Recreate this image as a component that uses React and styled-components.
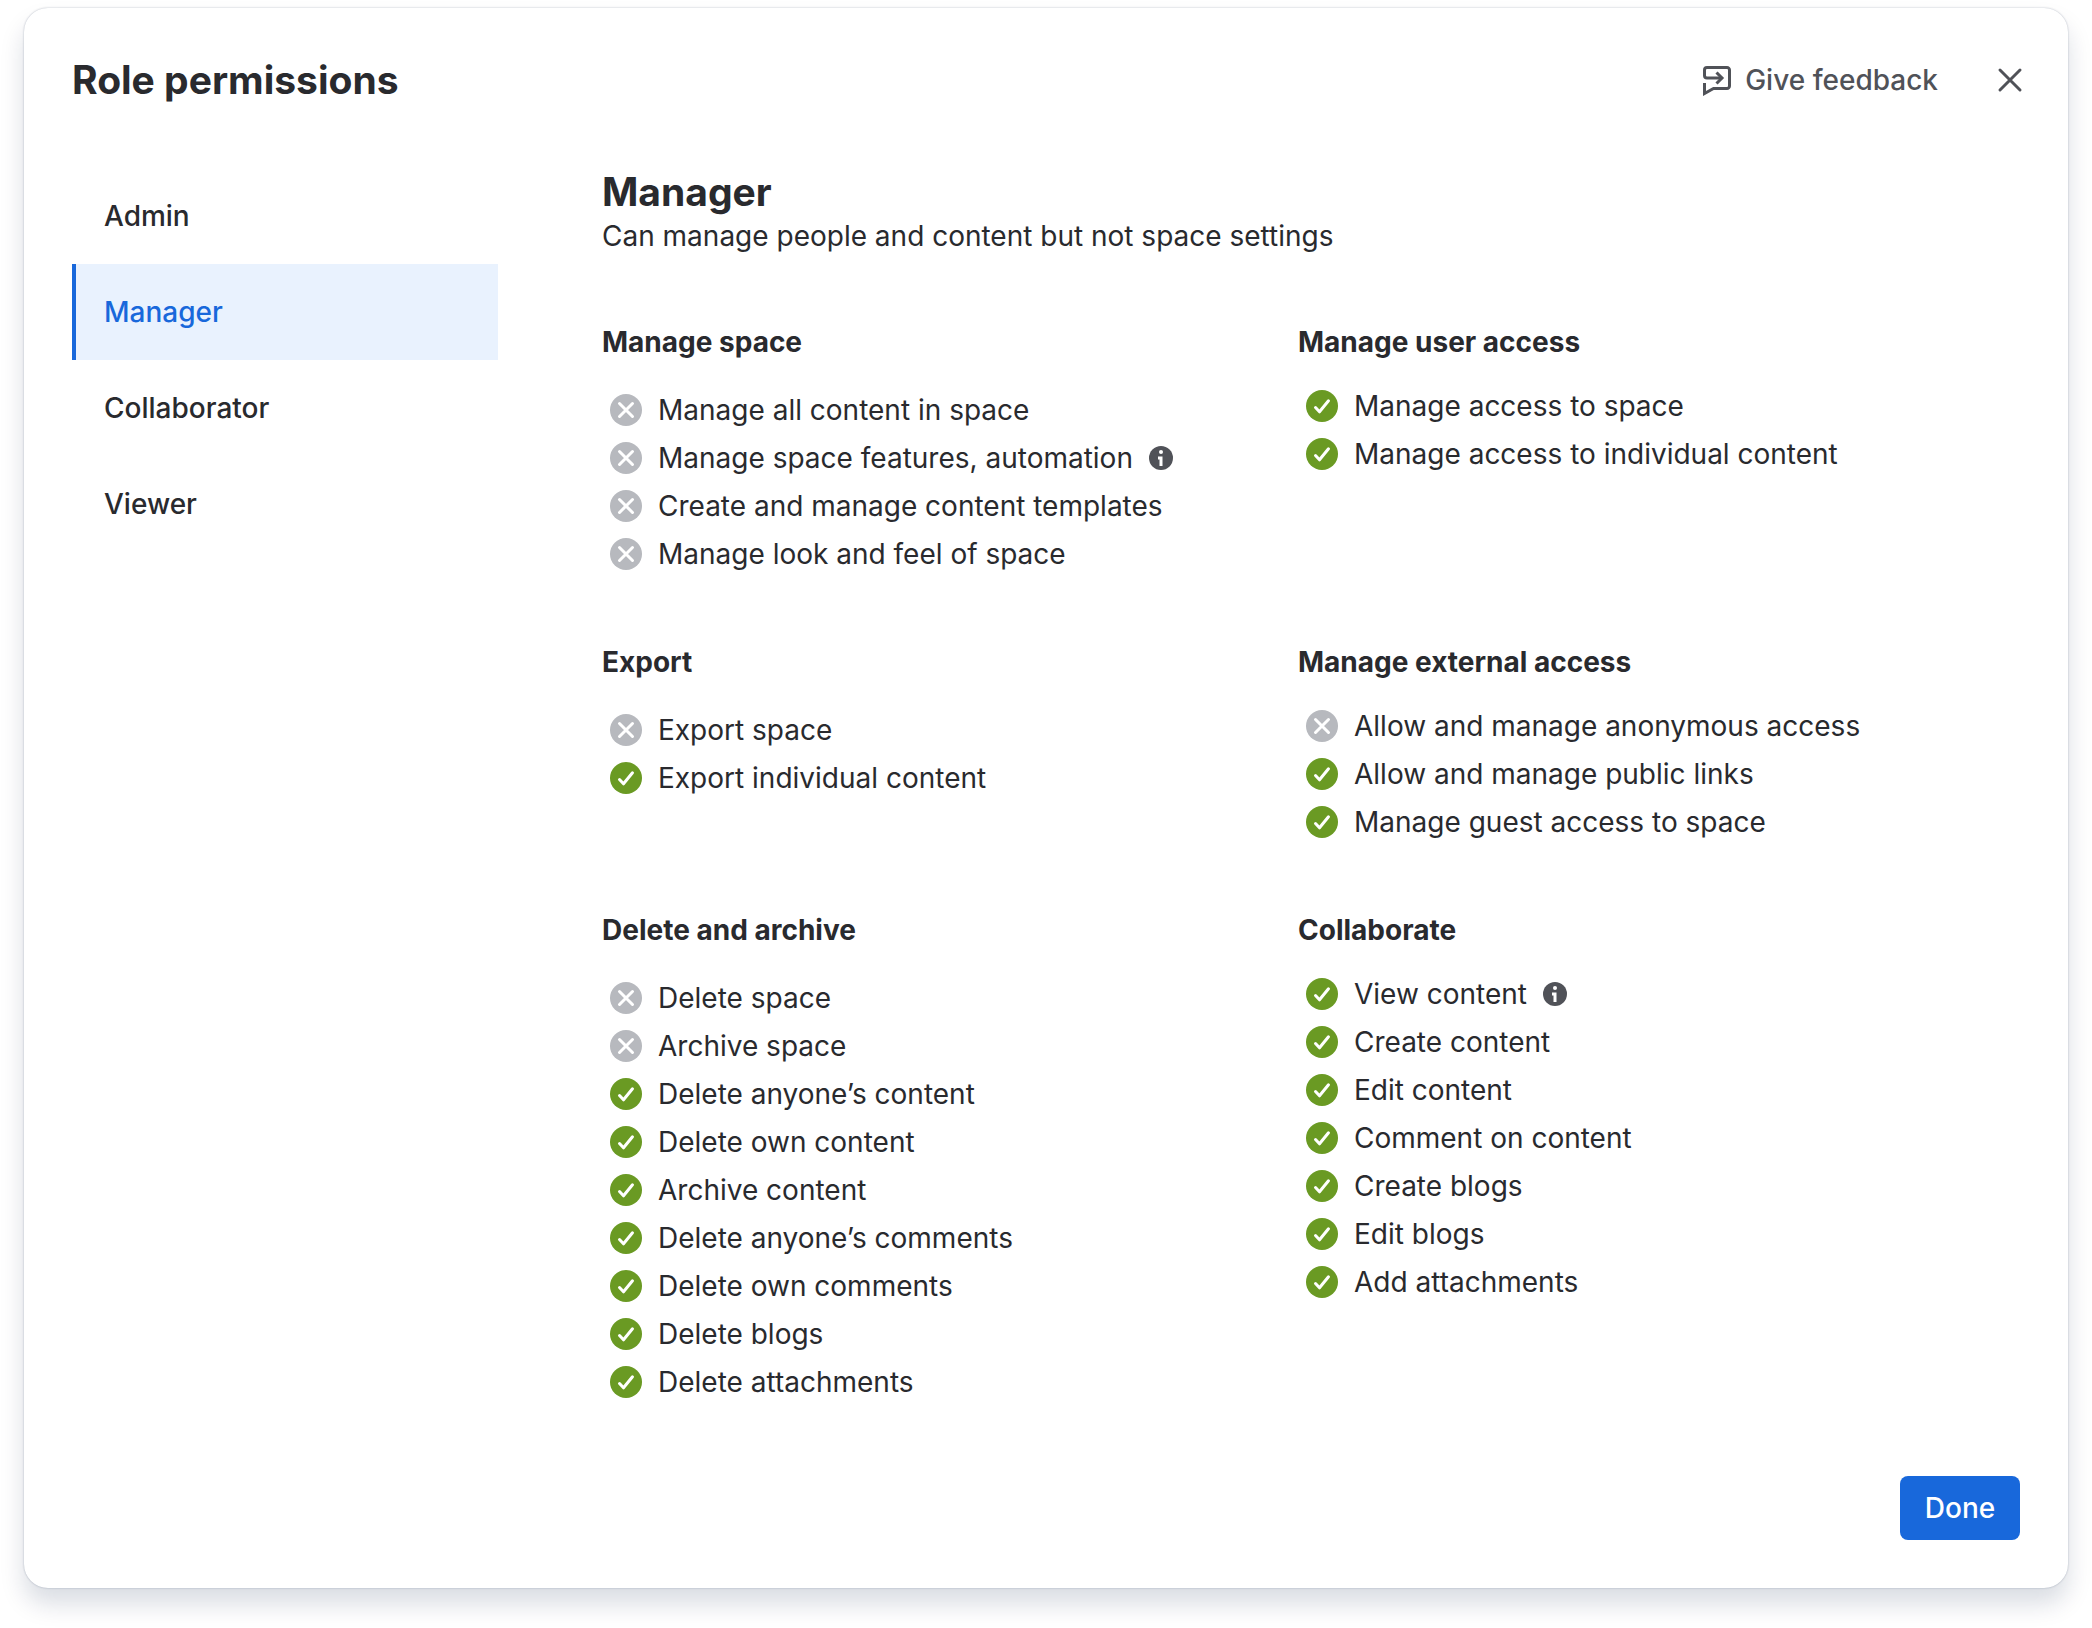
import React, { useState } from 'react'
import styled, { createGlobalStyle } from 'styled-components'

const roles = ['Admin', 'Manager', 'Collaborator', 'Viewer']

const sections = [
    {
        title: 'Manage space',
        items: [
            { label: 'Manage all content in space' },
            { label: 'Manage space features, automation', info: true },
            { label: 'Create and manage content templates' },
            { label: 'Manage look and feel of space' },
        ],
    },
    {
        title: 'Manage user access',
        items: [
            { label: 'Manage access to space', allowed: true },
            { label: 'Manage access to individual content', allowed: true },
        ],
    },
    {
        title: 'Export',
        items: [
            { label: 'Export space' },
            { label: 'Export individual content', allowed: true },
        ],
    },
    {
        title: 'Manage external access',
        items: [
            { label: 'Allow and manage anonymous access' },
            { label: 'Allow and manage public links', allowed: true },
            { label: 'Manage guest access to space', allowed: true },
        ],
    },
    {
        title: 'Delete and archive',
        items: [
            { label: 'Delete space' },
            { label: 'Archive space' },
            { label: 'Delete anyone’s content', allowed: true },
            { label: 'Delete own content', allowed: true },
            { label: 'Archive content', allowed: true },
            { label: 'Delete anyone’s comments', allowed: true },
            { label: 'Delete own comments', allowed: true },
            { label: 'Delete blogs', allowed: true },
            { label: 'Delete attachments', allowed: true },
        ],
    },
    {
        title: 'Collaborate',
        items: [
            { label: 'View content', allowed: true, info: true },
            { label: 'Create content', allowed: true },
            { label: 'Edit content', allowed: true },
            { label: 'Comment on content', allowed: true },
            { label: 'Create blogs', allowed: true },
            { label: 'Edit blogs', allowed: true },
            { label: 'Add attachments', allowed: true },
        ],
    },
]

const FeedbackIcon = () => (
    <svg width="32" height="32" viewBox="0 0 32 32" fill="none" stroke="currentColor" strokeWidth="3" aria-hidden="true">
        <path d="M20 14H6a2.5 2.5 0 0 1-2.5-2.5V6A2.5 2.5 0 0 1 6 3.500h20A2.500 2.500 0 0 1 28.500 6v16a2.500 2.500 0 0 1-2.500 2.500H12.500L3.500 29.500V19" />
        <path d="M15.500 8.500L21 14l-5.500 5.500" />
    </svg>
)

const CloseIcon = () => (
    <svg width="32" height="32" viewBox="0 0 32 32" fill="none" stroke="currentColor" strokeWidth="3" strokeLinecap="round" aria-hidden="true">
        <path d="M6 6l20 20M26 6L6 26" />
    </svg>
)

const StatusIcon = ({ allowed }) => (
    <svg width="32" height="32" viewBox="0 0 32 32" role="img" aria-label={allowed ? 'Allowed' : 'Not allowed'}>
        <circle cx="16" cy="16" r="16" fill={allowed ? '#6a9a23' : '#b7b9be'} />
        <path
            d={allowed ? 'M9.500 17.500l4 4.300 9-11' : 'M9.500 9.500l13 13M22.500 9.500l-13 13'}
            fill="none"
            stroke="#ffffff"
            strokeWidth="3"
            strokeLinecap="round"
            strokeLinejoin="round"
        />
    </svg>
)

const InfoIcon = () => (
    <svg width="24" height="24" viewBox="0 0 24 24" aria-hidden="true">
        <circle cx="12" cy="12" r="12" fill="#505258" />
        <circle cx="12" cy="6" r="2" fill="#ffffff" />
        <path d="M9 12h3v8" fill="none" stroke="#ffffff" strokeWidth="3" />
    </svg>
)

const App = () => {
    const [role, setRole] = useState('Manager')
    return (
        <>
            <GlobalStyle />
            <Page>
                <Dialog role="dialog" aria-labelledby="dialog-title">
                    <Header>
                        <Title id="dialog-title">Role permissions</Title>
                        <Actions>
                            <FeedbackButton type="button">
                                <FeedbackIcon />
                                Give feedback
                            </FeedbackButton>
                            <CloseButton type="button" aria-label="Close">
                                <CloseIcon />
                            </CloseButton>
                        </Actions>
                    </Header>
                    <Body>
                        <Nav>
                            {roles.map((name) => (
                                <NavItem key={name} type="button" $active={name === role} onClick={() => setRole(name)}>
                                    {name}
                                </NavItem>
                            ))}
                        </Nav>
                        <Content>
                            <Title as="h2">Manager</Title>
                            <Description>Can manage people and content but not space settings</Description>
                            <Sections>
                                {sections.map((section) => (
                                    <Section key={section.title}>
                                        <SectionTitle>{section.title}</SectionTitle>
                                        <List>
                                            {section.items.map((item) => (
                                                <Item key={item.label}>
                                                    <StatusIcon allowed={item.allowed} />
                                                    {item.label}
                                                    {item.info && (
                                                        <InfoButton type="button" aria-label="More information">
                                                            <InfoIcon />
                                                        </InfoButton>
                                                    )}
                                                </Item>
                                            ))}
                                        </List>
                                    </Section>
                                ))}
                            </Sections>
                        </Content>
                    </Body>
                    <Footer>
                        <DoneButton type="button">Done</DoneButton>
                    </Footer>
                </Dialog>
            </Page>
        </>
    )
}

const GlobalStyle = createGlobalStyle`
    * {
        box-sizing: border-box;
    }

    body {
        margin: 0;
        background: #ffffff;
        color: #292a2e;
        font-family: Inter, "Liberation Sans", sans-serif;
        font-size: 28px;
        line-height: 40px;
    }

    button {
        padding: 0;
        border: none;
        background: none;
        color: inherit;
        font: inherit;
        cursor: pointer;
    }

    svg {
        display: block;
        flex-shrink: 0;
    }
`

const Page = styled.div`
    padding: 8px 24px 40px;
`

const Dialog = styled.main`
    border-radius: 24px;
    background: #ffffff;
    box-shadow: 0 16px 24px rgba(9, 30, 66, 0.15), 0 0 2px rgba(9, 30, 66, 0.31);
`

const Header = styled.header`
    display: flex;
    justify-content: space-between;
    align-items: center;
    padding: 48px 42px 32px 48px;
`

const Title = styled.h1`
    margin: 0;
    font-size: 39px;
    font-weight: 653;
    line-height: 48px;
`

const Actions = styled.div`
    display: flex;
    align-items: center;
    gap: 56px;
    color: #505258;
`

const FeedbackButton = styled.button`
    display: flex;
    align-items: center;
    gap: 12px;
    font-weight: 500;
`

const CloseButton = styled.button`
    display: flex;
`

const Body = styled.div`
    display: flex;
    gap: 104px;
    padding: 32px 74px 0 48px;
`

const Nav = styled.nav`
    display: flex;
    flex-direction: column;
    flex: 0 0 426px;
`

const NavItem = styled.button`
    height: 96px;
    padding: 0 28px;
    border-left: 4px solid ${({ $active }) => ($active ? '#1868db' : 'transparent')};
    background: ${({ $active }) => ($active ? '#e9f2fe' : 'transparent')};
    color: ${({ $active }) => ($active ? '#1868db' : '#292a2e')};
    font-weight: 500;
    text-align: left;
`

const Content = styled.section`
    flex: 1;
    min-width: 0;
`

const Description = styled.p`
    margin: 0;
`

const Sections = styled.div`
    display: grid;
    grid-template-columns: 1fr 1fr;
    row-gap: 64px;
    margin-top: 66px;
`

const SectionTitle = styled.h3`
    margin: 0;
    font-size: 28px;
    font-weight: 653;
    line-height: 40px;
`

const List = styled.ul`
    margin: 24px 0 0;
    padding: 0 8px;
    list-style: none;
`

const Section = styled.section`
    &:nth-child(even) ${List} {
        margin-top: 20px;
    }
`

const Item = styled.li`
    display: flex;
    align-items: center;
    gap: 16px;
    height: 48px;
`

const InfoButton = styled.button`
    display: flex;
`

const Footer = styled.footer`
    display: flex;
    justify-content: flex-end;
    padding: 70px 48px 48px;
`

const DoneButton = styled.button`
    min-width: 120px;
    height: 64px;
    padding: 0 16px;
    border-radius: 8px;
    background: #1868db;
    color: #ffffff;
    font-weight: 500;
`

export default App
